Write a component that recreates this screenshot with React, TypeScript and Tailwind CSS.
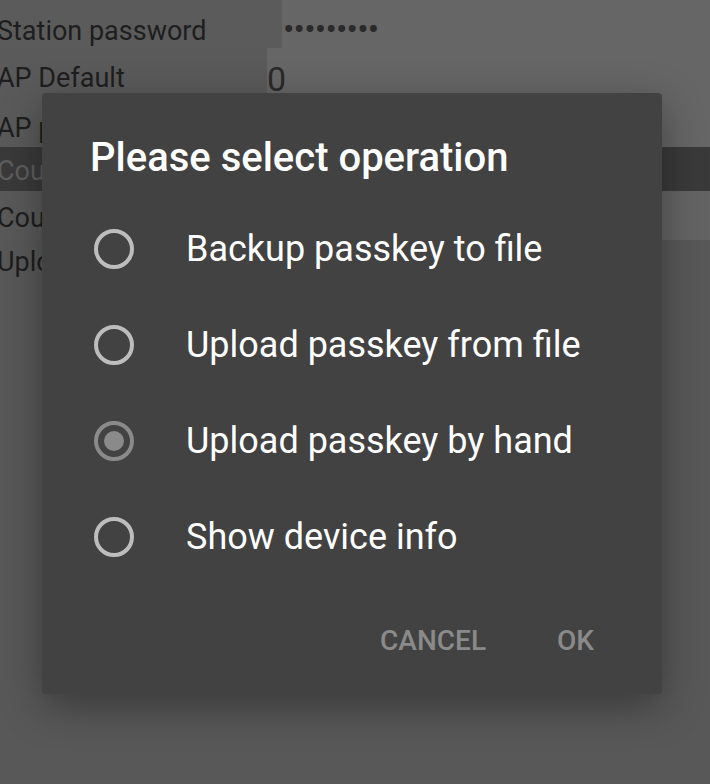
import React from "react";

function Radio({ checked }: { checked?: boolean }) {
  const c = checked ? "#8a8a8a" : "#bdbdbd";
  return (
    <svg width="44" height="44" viewBox="0 0 44 44" className="shrink-0">
      <circle cx="22" cy="22" r="18" fill="none" stroke={c} strokeWidth="4" />
      {checked && <circle cx="22" cy="22" r="10" fill={c} />}
    </svg>
  );
}

const options = [
  { label: "Backup passkey to file" },
  { label: "Upload passkey from file" },
  { label: "Upload passkey by hand", checked: true },
  { label: "Show device info" },
];

export default function App() {
  return (
    <div
      className="relative w-[710px] h-[784px] overflow-hidden bg-[#585858] text-[#1e1e1e]"
      style={{ fontFamily: "Roboto, 'Noto Sans', sans-serif" }}
    >
      {/* dimmed page beneath */}
      <div className="flex flex-col">
        <div className="flex h-[48px]">
          <div className="w-[282px] bg-[#5b5b5b] flex items-center pt-[14px]">
            <span className="ml-[-3px] text-[27px] leading-none whitespace-nowrap">Station password</span>
          </div>
          <div className="flex-1 bg-[#666666] flex items-center pl-[1px] pt-[10px]">
            {Array.from({ length: 9 }).map((_, i) => (
              <span key={i} className="w-[10.6px] text-center text-[34px] leading-none text-[#2a2a2a]">•</span>
            ))}
          </div>
        </div>
        <div className="flex h-[47px]">
          <div className="w-[267px] bg-[#5a5a5a] flex items-center pt-[14px]">
            <span className="ml-[-3px] text-[27px] leading-none whitespace-nowrap">AP Default</span>
          </div>
          <div className="flex-1 bg-[#666666] flex items-center pt-[14px]">
            <span className="text-[34px] leading-none text-[#2a2a2a]">0</span>
          </div>
        </div>
        <div className="flex h-[52px]">
          <div className="w-[267px] bg-[#5a5a5a] flex items-center pt-[14px]">
            <span className="ml-[-3px] text-[27px] leading-none whitespace-nowrap">AP password</span>
          </div>
          <div className="flex-1 bg-[#666666]" />
        </div>
        <div className="flex h-[44px] items-center bg-[#3a3a3a] pt-[4px]">
          <span className="ml-[-3px] text-[27px] leading-none text-[#5e5e5e] whitespace-nowrap">Country</span>
        </div>
        <div className="flex h-[49px]">
          <div className="w-[267px] bg-[#595959] flex items-center pt-[6px]">
            <span className="ml-[-3px] text-[27px] leading-none whitespace-nowrap">Country code</span>
          </div>
          <div className="flex-1 bg-[#646464]" />
        </div>
        <div className="flex h-[44px] items-center">
          <span className="ml-[-3px] text-[27px] leading-none whitespace-nowrap">Upload passkey</span>
        </div>
      </div>

      {/* dialog */}
      <div className="absolute left-[42px] top-[93px] w-[620px] h-[601px] rounded-[4px] bg-[#424242] shadow-[0_12px_40px_rgba(0,0,0,0.35)] flex flex-col">
        <div className="pl-[48px] pt-[42px] text-[40px] font-medium leading-[46px] text-white whitespace-nowrap">
          Please select operation
        </div>
        <div className="flex flex-col mt-[20px]">
          {options.map((o) => (
            <div key={o.label} className="flex items-center h-[96px] pl-[50px]">
              <Radio checked={o.checked} />
              <span className="ml-[50px] text-[36px] leading-none text-white whitespace-nowrap">{o.label}</span>
            </div>
          ))}
        </div>
        <div className="flex justify-end items-center mt-[35px] pr-[68px] gap-[71px] text-[28px] font-medium text-[#8a8a8a]">
          <span>CANCEL</span>
          <span>OK</span>
        </div>
      </div>
    </div>
  );
}
